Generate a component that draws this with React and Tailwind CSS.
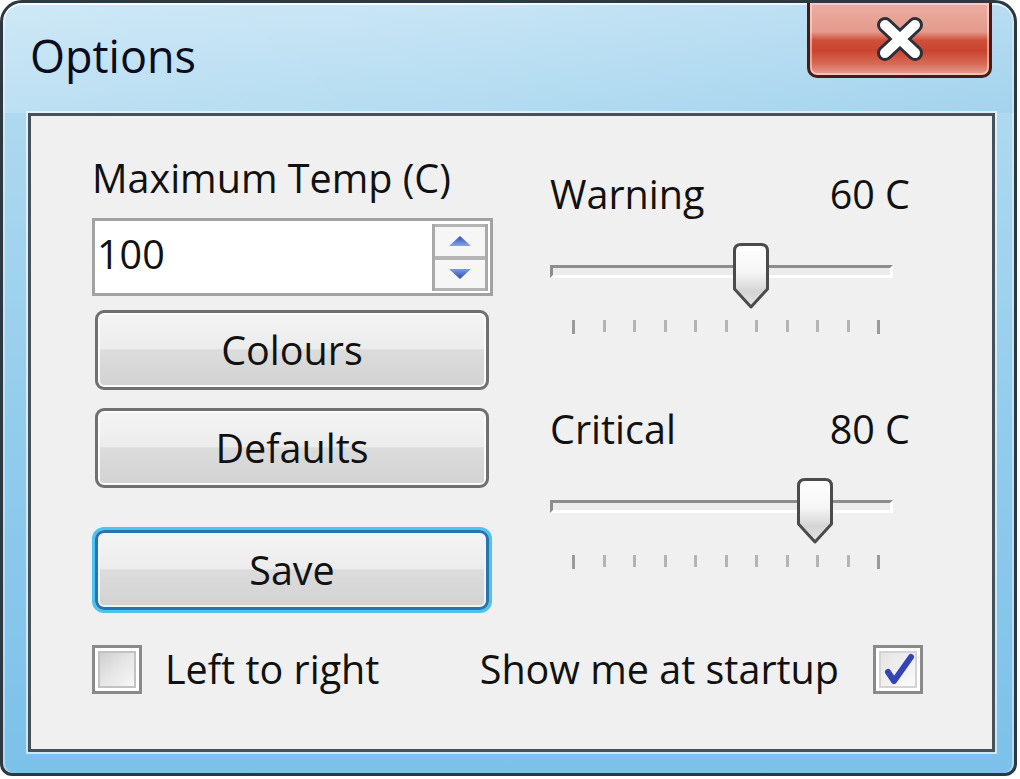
import React from "react";

function Thumb() {
  return (
    <svg width="38" height="68" viewBox="0 0 38 68">
      <defs>
        <linearGradient id="tg" x1="0" y1="0" x2="0" y2="1">
          <stop offset="0" stopColor="#ffffff" />
          <stop offset="0.45" stopColor="#f6f6f6" />
          <stop offset="0.75" stopColor="#d4d4d4" />
          <stop offset="1" stopColor="#e6e6e6" />
        </linearGradient>
      </defs>
      <path
        d="M2.5 9 Q2.5 2.5 9 2.5 H29 Q35.5 2.5 35.5 9 V47 L19 65 L2.5 47 Z"
        fill="url(#tg)"
        stroke="#4b4b4b"
        strokeWidth="3"
        strokeLinejoin="round"
      />
      <path d="M6 8 H32" stroke="#ffffff" strokeWidth="2" />
    </svg>
  );
}

function Slider({ value }) {
  const center = 9 + value * 3.2;
  const ticks = Array.from({ length: 11 });
  return (
    <div className="relative w-[343px] h-[91px]">
      <div className="absolute left-0 top-[23px] w-[343px] h-[13px] border-t-[3px] border-l-[3px] border-[#8d8d8d] border-b-[3px] border-r-[3px] border-b-white border-r-white bg-[#ececec]" />
      <div className="absolute left-[22px] top-[78px] w-[308px] flex justify-between">
        {ticks.map((_, i) => (
          <div
            key={i}
            className={
              i === 0 || i === 10
                ? "w-[3px] h-[14px] bg-[#9a9a9a]"
                : "w-[3px] h-[12px] bg-[#b4b4b4]"
            }
          />
        ))}
      </div>
      <div className="absolute top-0" style={{ left: center - 19 }}>
        <Thumb />
      </div>
    </div>
  );
}

function Button({ children, primary }) {
  return (
    <div
      className={
        "ml-[3px] w-[394px] h-[80px] rounded-[9px] border-[3px] flex items-center justify-center bg-[linear-gradient(180deg,#f4f4f4_0%,#ececec_48%,#dcdcdc_50%,#d2d2d2_100%)] " +
        (primary
          ? "border-[#2b73a8] shadow-[0_0_0_3px_#4cc3f1,inset_0_0_0_2px_#e8f7ff]"
          : "border-[#707070] shadow-[inset_0_0_0_2px_#fbfbfb]")
      }
    >
      <span className="leading-[39px]">{children}</span>
    </div>
  );
}

function Checkbox({ checked }) {
  return (
    <div className="w-[50px] h-[49px] border-[3px] border-[#8a8a8a] bg-white p-[3px] flex">
      <div
        className={
          "flex-1 border-[2px] flex items-center justify-center " +
          (checked
            ? "border-[#d4d4d4] bg-[linear-gradient(135deg,#e4e4e4,#fbfbfb)]"
            : "border-[#c2c2c2] bg-[linear-gradient(135deg,#cfcfcf_0%,#e6e6e6_50%,#f7f7f7_100%)]")
        }
      >
        {checked && (
          <svg width="34" height="33" viewBox="0 0 34 33">
            <path
              d="M7 19 L13 28 L30 4"
              fill="none"
              stroke="#3444b4"
              strokeWidth="6"
              strokeLinecap="round"
              strokeLinejoin="round"
            />
          </svg>
        )}
      </div>
    </div>
  );
}

export default function App() {
  return (
    <div className="w-[1020px] h-[779px] bg-white overflow-hidden font-['Open_Sans','Noto_Sans',sans-serif] text-[39.5px] leading-[39px] text-[#111]">
      <div className="w-[1017px] h-[776px] border-[3px] border-[#2c3942] rounded-t-[22px] rounded-b-[12px] bg-[linear-gradient(180deg,#c4e3f4_0%,#aed9f0_14%,#8fcbec_60%,#7cc1ea_100%)] shadow-[inset_0_2px_0_rgba(255,255,255,0.85),inset_2px_0_0_rgba(255,255,255,0.4),inset_-2px_0_0_rgba(255,255,255,0.4)] flex flex-col overflow-hidden">
        <div className="h-[110px] flex items-start justify-between bg-[linear-gradient(90deg,rgba(255,255,255,0.18)_0%,rgba(255,255,255,0.08)_40%,rgba(0,120,200,0.06)_100%)]">
          <div className="pl-[27px] pt-[30px] text-[45px] leading-[45px] text-[#0c0c20]">
            Options
          </div>
          <div className="-mt-[3px] mr-[22px] w-[185px] h-[78px] rounded-b-[10px] border-[3px] border-[#4a1b12] bg-[linear-gradient(180deg,#eaaea2_0%,#e49a8c_40%,#cf4f38_52%,#c9442e_66%,#d76b58_85%,#e7a093_100%)] shadow-[inset_0_0_0_2px_rgba(255,230,225,0.55)] flex items-center justify-center">
            <svg width="54" height="46" viewBox="0 0 54 46">
              <path
                d="M12 9 L42 37 M42 9 L12 37"
                stroke="#2a2f3a"
                strokeWidth="16"
                strokeLinecap="round"
              />
              <path
                d="M12 9 L42 37 M42 9 L12 37"
                stroke="#ffffff"
                strokeWidth="10"
                strokeLinecap="round"
              />
            </svg>
          </div>
        </div>
        <div className="ml-[25px] mr-[19px] h-[639px] border-[3px] border-[#46525b] bg-[#f0f0f0] shadow-[0_0_0_2px_rgba(255,255,255,0.6)] pt-[43px] pl-[61px] flex flex-col">
          <div className="flex">
            <div className="w-[401px] flex flex-col">
              <div className="h-[39px]">Maximum Temp (C)</div>
              <div className="mt-[20px] h-[78px] border-[3px] border-[#a2a2a2] bg-white flex">
                <div className="flex-1 pl-[2px] pt-[14px]">100</div>
                <div className="w-[56px] mt-[3px] mb-[2px] mr-[2px] flex flex-col border-x-[3px] border-[#a9a9a9] bg-[#f6f6f6]">
                  <div className="flex-1 border-t-[3px] border-b-[2px] border-[#b4b4b4] flex items-center justify-center">
                    <svg width="24" height="12" viewBox="0 0 24 12">
                      <defs>
                        <linearGradient id="ua" x1="0" y1="0" x2="0" y2="1">
                          <stop offset="0" stopColor="#2f4fb8" />
                          <stop offset="1" stopColor="#86a6e6" />
                        </linearGradient>
                      </defs>
                      <path d="M12 1 L23 11 H1 Z" fill="url(#ua)" />
                    </svg>
                  </div>
                  <div className="flex-1 border-t-[2px] border-b-[3px] border-[#b4b4b4] flex items-center justify-center">
                    <svg width="24" height="12" viewBox="0 0 24 12">
                      <defs>
                        <linearGradient id="da" x1="0" y1="0" x2="0" y2="1">
                          <stop offset="0" stopColor="#7d9de2" />
                          <stop offset="1" stopColor="#2a48b0" />
                        </linearGradient>
                      </defs>
                      <path d="M1 1 H23 L12 11 Z" fill="url(#da)" />
                    </svg>
                  </div>
                </div>
              </div>
              <div className="mt-[14px]">
                <Button>Colours</Button>
              </div>
              <div className="mt-[18px]">
                <Button>Defaults</Button>
              </div>
              <div className="mt-[42px]">
                <Button primary>Save</Button>
              </div>
            </div>
            <div className="ml-[57px] mt-[16px] w-[360px] flex flex-col">
              <div className="h-[39px] flex justify-between">
                <span>Warning</span>
                <span>60 C</span>
              </div>
              <div className="mt-[28px]">
                <Slider value={60} />
              </div>
              <div className="mt-[77px] h-[39px] flex justify-between">
                <span>Critical</span>
                <span>80 C</span>
              </div>
              <div className="mt-[28px]">
                <Slider value={80} />
              </div>
            </div>
          </div>
          <div className="mt-[35px] w-[831px] flex items-center justify-between">
            <div className="flex items-center">
              <Checkbox />
              <span className="ml-[23px]">Left to right</span>
            </div>
            <div className="flex items-center">
              <span className="mr-[34px]">Show me at startup</span>
              <Checkbox checked />
            </div>
          </div>
        </div>
      </div>
    </div>
  );
}
